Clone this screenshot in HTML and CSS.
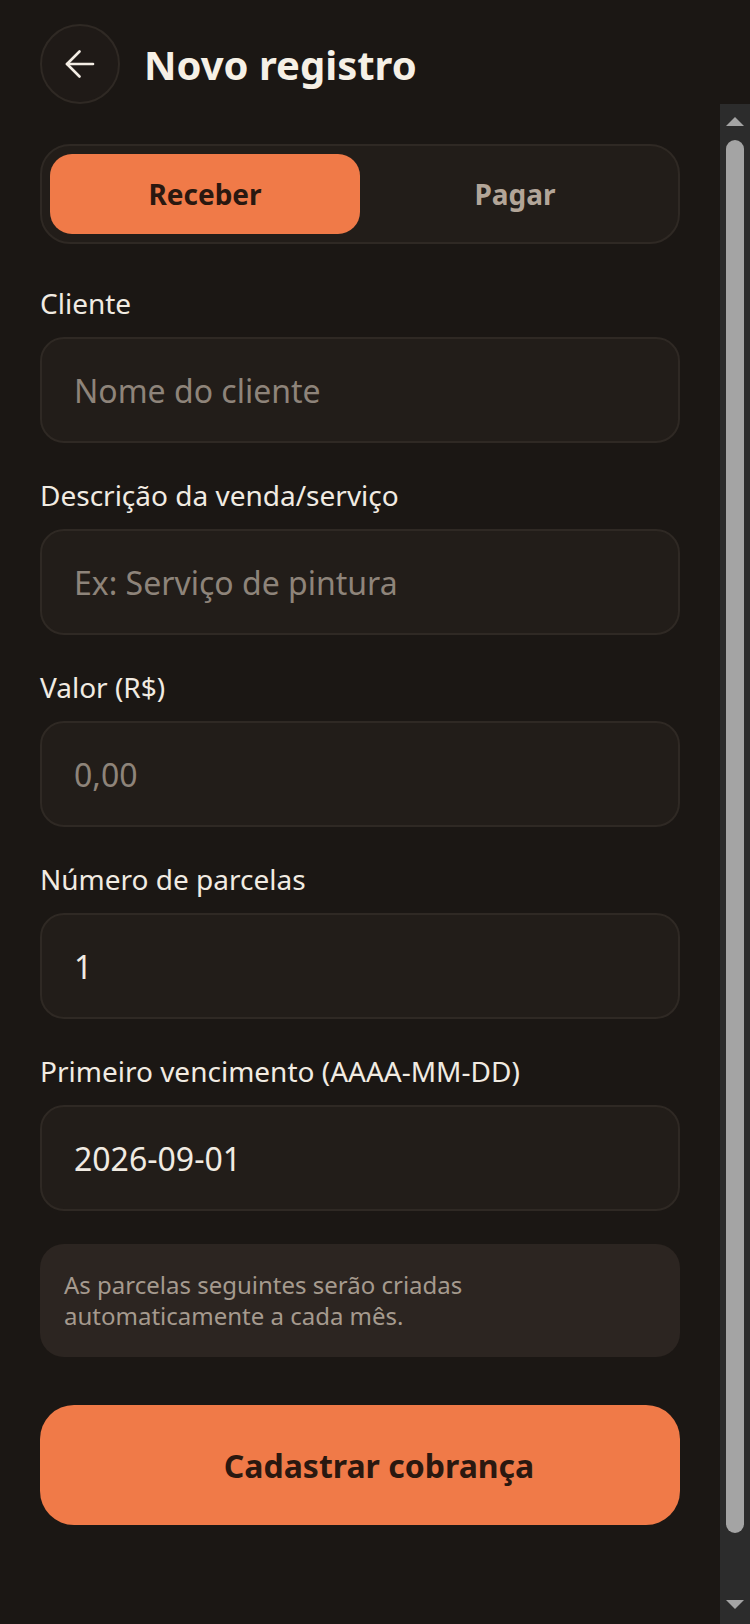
FILE: index.html
```html
<!DOCTYPE html>
<html lang="pt-BR">
<head>
<meta charset="utf-8">
<title>Novo registro</title>
<link rel="stylesheet" href="styles.css">
</head>
<body>
<div class="app">
  <header class="header">
    <button class="back" type="button" aria-label="Voltar">
      <svg width="30" height="28" viewBox="0 0 30 28" fill="none" stroke="currentColor" stroke-width="2.6" stroke-linecap="round" stroke-linejoin="round">
        <path d="M28 14H2"/>
        <path d="M14.5 1.5L2 14l12.5 12.5"/>
      </svg>
    </button>
    <h1 class="title">Novo registro</h1>
  </header>
  <div class="viewport">
    <main class="scroll">
      <div class="seg">
        <button class="seg-btn active" type="button">Receber</button>
        <button class="seg-btn" type="button">Pagar</button>
      </div>
      <div class="fields">
        <label class="field">
          <span class="label">Cliente</span>
          <input class="input" type="text" placeholder="Nome do cliente">
        </label>
        <label class="field">
          <span class="label">Descrição da venda/serviço</span>
          <input class="input" type="text" placeholder="Ex: Serviço de pintura">
        </label>
        <label class="field">
          <span class="label">Valor (R$)</span>
          <input class="input" type="text" placeholder="0,00">
        </label>
        <label class="field">
          <span class="label">Número de parcelas</span>
          <input class="input" type="text" value="1">
        </label>
        <label class="field">
          <span class="label">Primeiro vencimento (AAAA-MM-DD)</span>
          <input class="input" type="text" value="2026-09-01">
        </label>
        <p class="info">As parcelas seguintes serão criadas<br>automaticamente a cada mês.</p>
      </div>
      <button class="submit" type="button">Cadastrar cobrança</button>
    </main>
    <div class="scrollbar" aria-hidden="true">
      <div class="sb-btn sb-up"><span class="tri-up"></span></div>
      <div class="sb-track"><div class="sb-thumb"></div></div>
      <div class="sb-btn sb-down"><span class="tri-down"></span></div>
    </div>
  </div>
</div>
</body>
</html>
```
FILE: styles.css
```css
* { box-sizing: border-box; }
html, body { margin: 0; padding: 0; }
body {
  background: #1b1714;
  font-family: "Noto Sans", "Open Sans", sans-serif;
  color: #f3ede4;
}
.app {
  height: 1624px;
  display: flex;
  flex-direction: column;
  overflow: hidden;
}
.header {
  display: flex;
  align-items: center;
  gap: 24px;
  padding: 24px 40px 0;
  flex: none;
}
.back {
  width: 80px;
  height: 80px;
  border-radius: 50%;
  border: 2px solid #2f2924;
  background: #1f1a17;
  color: #f3ede4;
  display: flex;
  align-items: center;
  justify-content: center;
  padding: 0 1px 0 0;
}
.title {
  margin: 0;
  font-size: 40px;
  font-weight: 700;
  color: #f6f0e6;
  line-height: normal;
}
.viewport {
  flex: 1;
  min-height: 0;
  display: flex;
}
.scroll {
  flex: 1;
  min-width: 0;
  overflow: hidden;
  padding: 40px 40px 160px;
}
.scrollbar {
  width: 30px;
  flex: none;
  display: flex;
  flex-direction: column;
  background: #2c2c2c;
}
.sb-btn {
  height: 30px;
  flex: none;
  display: flex;
  justify-content: center;
  align-items: flex-start;
}
.sb-up { padding-top: 13px; }
.sb-down { padding-top: 6px; }
.tri-up {
  width: 0;
  height: 0;
  border-left: 9px solid transparent;
  border-right: 9px solid transparent;
  border-bottom: 9px solid #a4a4a4;
}
.tri-down {
  width: 0;
  height: 0;
  border-left: 9px solid transparent;
  border-right: 9px solid transparent;
  border-top: 9px solid #a4a4a4;
}
.sb-track {
  flex: 1;
  padding: 6px;
}
.sb-thumb {
  height: 1393px;
  border-radius: 9px;
  background: #a4a4a4;
}
.seg {
  display: grid;
  grid-template-columns: 1fr 1fr;
  padding: 8px;
  border: 2px solid #2f2924;
  border-radius: 30px;
  background: #221d19;
}
.seg-btn {
  height: 80px;
  border: none;
  border-radius: 22px;
  background: transparent;
  font-family: inherit;
  font-size: 28px;
  font-weight: 700;
  color: #b2a598;
  padding: 0;
}
.seg-btn.active {
  background: #f07a48;
  color: #2a1810;
}
.fields {
  display: flex;
  flex-direction: column;
  gap: 33px;
  margin-top: 40px;
}
.field {
  display: flex;
  flex-direction: column;
  gap: 15px;
}
.label {
  font-size: 28px;
  line-height: 38px;
  color: #f1ebe2;
}
.input {
  height: 106px;
  border: 2px solid #2f2924;
  border-radius: 24px;
  background: #221d19;
  padding: 0 32px;
  font-family: inherit;
  font-size: 32px;
  color: #f1ebe2;
  outline: none;
  width: 100%;
}
.input::placeholder {
  color: #8e847a;
  opacity: 1;
}
.info {
  margin: 0;
  padding: 25px 24px 26px;
  border-radius: 24px;
  background: #2c2521;
  font-size: 24px;
  line-height: 31px;
  color: #a59a8e;
}
.submit {
  display: block;
  width: 100%;
  height: 120px;
  margin-top: 48px;
  border: none;
  border-radius: 34px;
  background: #f07a48;
  color: #2a1810;
  font-family: inherit;
  font-size: 32px;
  font-weight: 700;
  padding: 0 0 0 38px;
}
```
